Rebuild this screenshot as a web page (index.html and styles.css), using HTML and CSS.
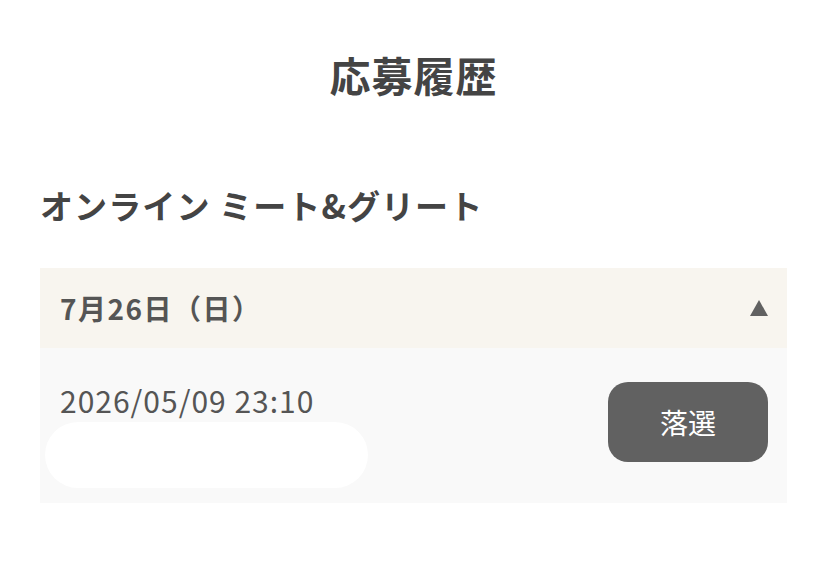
FILE: index.html
```html
<!DOCTYPE html>
<html lang="ja">
<head>
<meta charset="utf-8">
<link rel="stylesheet" href="styles.css">
</head>
<body>
<main class="page">
  <h1 class="title">応募履歴</h1>
  <h2 class="event">オンライン ミート&amp;グリート</h2>
  <section class="card">
    <div class="card-head">
      <span class="day">7月26日（日）</span>
      <span class="tri"></span>
    </div>
    <div class="card-body">
      <div class="info">
        <div class="date">2026/05/09 23:10</div>
        <div class="blob"></div>
      </div>
      <div class="badge">落選</div>
    </div>
  </section>
</main>
</body>
</html>
```
FILE: styles.css
```css
html, body {
  margin: 0;
  padding: 0;
  background: #ffffff;
}
body {
  font-family: "Noto Sans CJK JP", "Noto Sans", sans-serif;
  color: #444444;
}
.page {
  padding: 50px 40px 0 40px;
}
.title {
  margin: 0;
  text-align: center;
  font-size: 41px;
  line-height: 48px;
  font-weight: 700;
  color: #444444;
  letter-spacing: 1px;
}
.event {
  margin: 88px 0 0 0;
  font-size: 33px;
  line-height: 38px;
  font-weight: 700;
  color: #444444;
  letter-spacing: 1.1px;
}
.card {
  margin-top: 44px;
  width: 747px;
}
.card-head {
  height: 80px;
  background: #f8f5ef;
  display: flex;
  align-items: center;
  justify-content: space-between;
  padding: 0 19px 0 20px;
}
.day {
  font-size: 28px;
  font-weight: 700;
  color: #555555;
  letter-spacing: 1.5px;
}
.tri {
  width: 0;
  height: 0;
  border-left: 9px solid transparent;
  border-right: 9px solid transparent;
  border-bottom: 16px solid #616161;
}
.card-body {
  background: #f9f9f9;
  display: flex;
  justify-content: space-between;
  align-items: flex-start;
  padding: 34px 19px 15px 20px;
}
.info {
  display: flex;
  flex-direction: column;
}
.date {
  font-size: 30px;
  line-height: 36px;
  color: #555555;
  letter-spacing: 1px;
}
.blob {
  margin-top: 4px;
  margin-left: -15px;
  width: 323px;
  height: 66px;
  border-radius: 33px;
  background: #ffffff;
}
.badge {
  width: 160px;
  height: 80px;
  border-radius: 20px;
  background: #616161;
  color: #ffffff;
  font-size: 28px;
  display: flex;
  align-items: center;
  justify-content: center;
}
```
